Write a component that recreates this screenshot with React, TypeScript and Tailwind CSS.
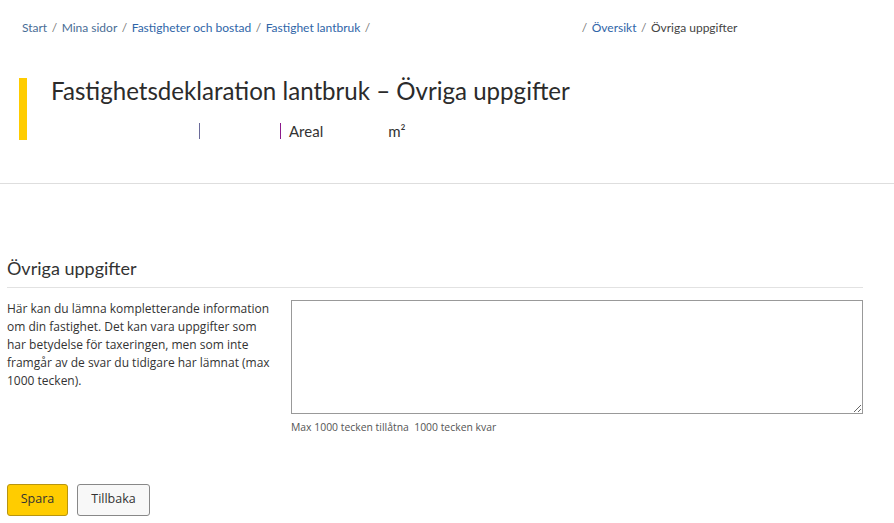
export default function App() {
  return (
    <div className="min-h-screen bg-white text-[#333]" style={{ fontFamily: "'Open Sans', sans-serif" }}>
      <nav className="flex items-center pl-[22px] pt-[19px] text-[12px] text-[#555] font-['Lato',sans-serif]">
        <a className="text-[#4a6d96]">Start</a>
        <span className="mx-[4.5px] text-[#777]">/</span>
        <a className="text-[#4a6d96]">Mina sidor</a>
        <span className="mx-[4.5px] text-[#777]">/</span>
        <a className="text-[#2f65a8]">Fastigheter och bostad</a>
        <span className="mx-[4.5px] text-[#777]">/</span>
        <a className="text-[#2f65a8]">Fastighet lantbruk</a>
        <span className="mx-[4.5px] text-[#777]">/</span>
        <span className="w-[207px]" />
        <span className="mr-[4.5px] text-[#777]">/</span>
        <a className="text-[#2f65a8]">Översikt</a>
        <span className="mx-[4.5px] text-[#777]">/</span>
        <span className="text-[#444]">Övriga uppgifter</span>
      </nav>

      <header className="mt-[41px] ml-[19px] flex h-[62px]">
        <div className="w-[8px] bg-[#ffcc00]" />
        <div className="pl-[24px]">
          <h1 className="text-[24.1px] leading-[24px] mt-[1px] font-['Lato',sans-serif] text-[#2b2b2b]">
            Fastighetsdeklaration lantbruk – Övriga uppgifter
          </h1>
          <div className="mt-[17px] flex items-center text-[15px] font-['Lato',sans-serif] text-[#333]">
            <span className="ml-[148px] h-[16px] w-px bg-[#6b6b9a]" />
            <span className="ml-[80px] h-[16px] w-px bg-[#8b1a8b]" />
            <span className="ml-[8px]">Areal</span>
            <span className="ml-[65px]">m²</span>
          </div>
        </div>
      </header>

      <hr className="mt-[43px] border-0 border-t border-[#dedede]" />

      <section className="mt-[73px] pl-[7px] pr-[31px]">
        <h2 className="text-[18px] leading-[22px] font-['Lato',sans-serif] text-[#333] pb-[8px] border-b border-[#e2e2e2]">
          Övriga uppgifter
        </h2>
        <div className="mt-[12px] flex">
          <p className="w-[270px] text-[12px] leading-[18px] text-[#333]">
            Här kan du lämna kompletterande information om din fastighet. Det kan vara uppgifter som har betydelse för taxeringen, men som inte framgår av de svar du tidigare har lämnat (max 1000 tecken).
          </p>
          <div className="ml-[14px] flex-1">
            <textarea className="block w-full h-[114px] border border-[#999] rounded-none outline-none" />
            <div className="mt-[6px] text-[10.4px] text-[#555]">Max 1000 tecken tillåtna &nbsp;1000 tecken kvar</div>
          </div>
        </div>
      </section>

      <div className="mt-[48px] pl-[7px] flex gap-[9px]">
        <button className="h-[32px] w-[61px] rounded-[3px] bg-[#ffcc00] border border-[#b8950f] text-[12.5px] text-[#333]">
          Spara
        </button>
        <button className="h-[32px] w-[73px] rounded-[3px] bg-[#f8f8f8] border border-[#888] text-[12.5px] text-[#333]">
          Tillbaka
        </button>
      </div>
    </div>
  );
}
